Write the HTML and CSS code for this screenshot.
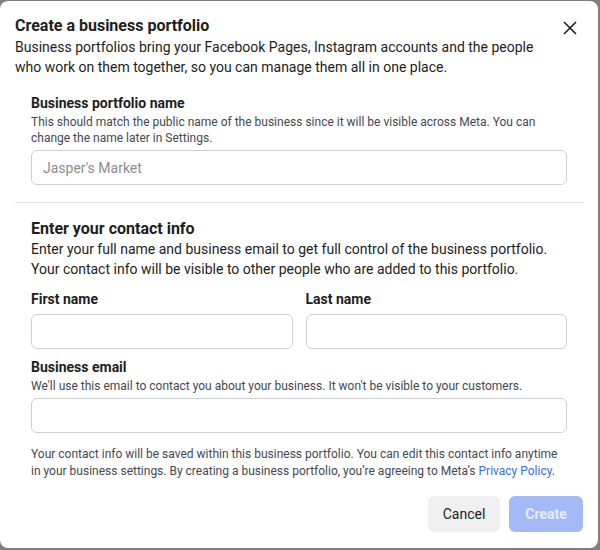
FILE: index.html
```html
<!DOCTYPE html>
<html lang="en">
<head>
<meta charset="utf-8">
<title>Create a business portfolio</title>
<link rel="stylesheet" href="styles.css">
</head>
<body>
<div class="dialog">
  <header class="head">
    <h1 class="title">Create a business portfolio</h1>
    <p class="intro">Business portfolios bring your Facebook Pages, Instagram accounts and the people who work on them together, so you can manage them all in one place.</p>
    <button class="close" aria-label="Close">
      <svg width="14" height="14" viewBox="0 0 14 14"><path d="M1 1L13 13M13 1L1 13" stroke="#1c1e21" stroke-width="1.6" fill="none"/></svg>
    </button>
  </header>
  <section class="section first">
    <div class="label">Business portfolio name</div>
    <div class="help">This should match the public name of the business since it will be visible across Meta. You can change the name later in Settings.</div>
    <div class="input"><span class="placeholder">Jasper's Market</span></div>
  </section>
  <div class="divider"></div>
  <section class="section">
    <h2 class="subtitle">Enter your contact info</h2>
    <p class="desc">Enter your full name and business email to get full control of the business portfolio. Your contact info will be visible to other people who are added to this portfolio.</p>
    <div class="row">
      <div class="field">
        <div class="label">First name</div>
        <div class="input tall"></div>
      </div>
      <div class="field">
        <div class="label">Last name</div>
        <div class="input tall"></div>
      </div>
    </div>
    <div class="label email-label">Business email</div>
    <div class="help single">We'll use this email to contact you about your business. It won't be visible to your customers.</div>
    <div class="input tall"></div>
    <p class="note">Your contact info will be saved within this business portfolio. You can edit this contact info anytime in your business settings. By creating a business portfolio, you’re agreeing to Meta’s <a class="link" href="#">Privacy Policy</a>.</p>
  </section>
  <footer class="actions">
    <button class="btn cancel">Cancel</button>
    <button class="btn create">Create</button>
  </footer>
</div>
</body>
</html>
```
FILE: styles.css
```css
html, body {
  margin: 0;
  padding: 0;
}
body {
  background: #7f7f7f;
  width: 600px;
  height: 550px;
  overflow: hidden;
  font-family: Roboto, "Liberation Sans", Arial, sans-serif;
  color: #1c1e21;
}
.dialog {
  box-sizing: border-box;
  width: 598px;
  height: 547px;
  margin-top: 1px;
  background: #fff;
  border-radius: 8px;
  display: flex;
  flex-direction: column;
}
.head {
  position: relative;
  padding: 14px 15px 0;
}
.title {
  margin: 0;
  font-size: 16px;
  line-height: 22px;
  font-weight: 700;
  color: #1c1e21;
}
.intro {
  margin: 0;
  max-width: 530px;
  font-size: 14px;
  line-height: 20px;
  color: #1c1e21;
}
.close {
  position: absolute;
  top: 19px;
  right: 20px;
  width: 16px;
  height: 16px;
  padding: 0;
  border: 0;
  background: none;
  display: flex;
  align-items: center;
  justify-content: center;
}
.section {
  padding: 0 31px;
}
.first {
  padding-top: 16px;
}
.label {
  font-size: 14px;
  line-height: 20px;
  font-weight: 700;
  color: #1c1e21;
}
.help {
  margin-top: 1px;
  font-size: 12px;
  line-height: 16px;
  color: #444950;
}
.input {
  box-sizing: border-box;
  height: 35px;
  margin-top: 4px;
  border: 1px solid #ccd0d5;
  border-radius: 6px;
  padding: 0 11px;
  display: flex;
  align-items: center;
}
.input.tall {
  height: 35px;
  margin-top: 5px;
}
.placeholder {
  font-size: 14px;
  color: #8a8d91;
}
.divider {
  height: 1px;
  background: #dadde1;
  margin: 17px 15px 16px;
}
.subtitle {
  margin: 0;
  font-size: 16px;
  line-height: 20px;
  font-weight: 700;
}
.desc {
  margin: 1px 0 0;
  font-size: 14px;
  line-height: 19.5px;
}
.row {
  display: grid;
  grid-template-columns: 1fr 1fr;
  column-gap: 13px;
  margin-top: 10px;
}
.email-label {
  margin-top: 8px;
}
.help.single + .input {
  margin-top: 4px;
}
.note {
  margin: 13px 0 0;
  font-size: 12px;
  line-height: 17px;
  color: #444950;
}
.link {
  color: #3b6fd8;
  text-decoration: none;
}
.actions {
  display: flex;
  justify-content: flex-end;
  gap: 9px;
  padding: 16px 15px 0;
}
.btn {
  height: 36px;
  border: 0;
  border-radius: 6px;
  font-family: inherit;
  font-size: 14px;
  padding: 0;
}
.cancel {
  width: 72px;
  background: #f0f0f0;
  color: #1c1e21;
}
.create {
  width: 74px;
  background: #a3baf6;
  color: #e6ecfc;
  font-weight: 700;
}
```
